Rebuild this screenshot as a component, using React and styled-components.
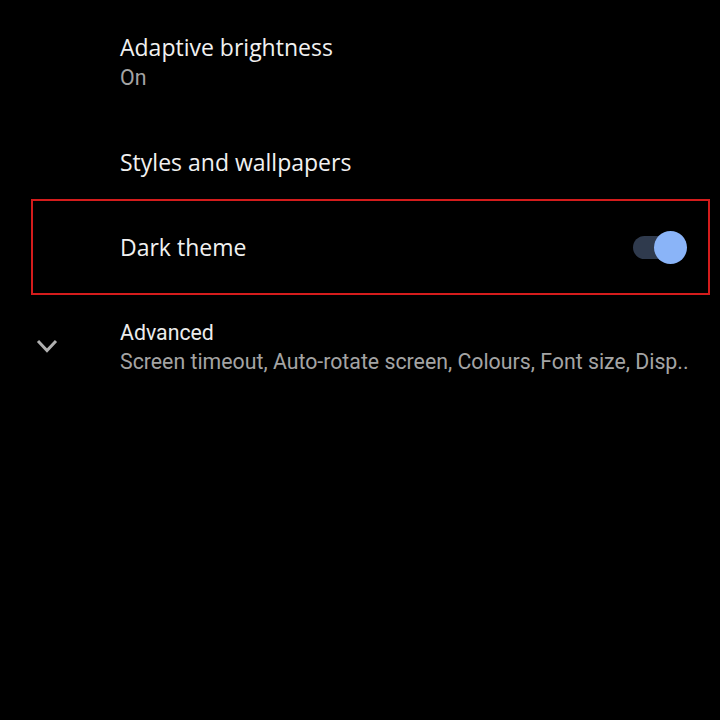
import styled, { createGlobalStyle } from "styled-components";

const GlobalStyle = createGlobalStyle`
  html, body {
    margin: 0;
    padding: 0;
    background: #000;
  }
`;

const Screen = styled.div`
  width: 720px;
  height: 720px;
  background: #000;
  display: flex;
  flex-direction: column;
  overflow: hidden;
`;

const Pref = styled.div`
  display: flex;
  align-items: ${(p) => (p.top ? "flex-start" : "center")};
  height: ${(p) => p.h}px;
  padding: ${(p) => p.pad || "0"};
  box-sizing: border-box;
`;

const Highlight = styled.div`
  display: flex;
  align-items: center;
  height: 96px;
  margin: 0 10px 0 31px;
  padding: 0 21px 0 87px;
  border: 2px solid #d41c1c;
  box-sizing: border-box;
`;

const IconSlot = styled.div`
  width: 120px;
  flex-shrink: 0;
  display: flex;
  padding-left: 36px;
  padding-top: ${(p) => p.offset || 0}px;
  box-sizing: border-box;
`;

const Texts = styled.div`
  display: flex;
  flex-direction: column;
  flex: 1;
  min-width: 0;
`;

const Title = styled.div`
  font-family: "Open Sans", Roboto, sans-serif;
  font-size: 23px;
  line-height: 30px;
  color: #f1f1f1;
  white-space: nowrap;
`;

const Summary = styled.div`
  font-family: Roboto, "Open Sans", sans-serif;
  font-size: 21.3px;
  line-height: 31px;
  color: #a4a4a4;
  white-space: nowrap;
`;

const AdvTitle = styled.div`
  font-family: Roboto, sans-serif;
  font-size: 21.3px;
  line-height: 26px;
  color: #ececec;
`;

const Track = styled.div`
  position: relative;
  width: 50px;
  height: 23px;
  border-radius: 12px;
  background: #2f3a4d;
  margin-right: 4px;
`;

const Thumb = styled.div`
  position: absolute;
  right: -4px;
  top: -5px;
  width: 33px;
  height: 33px;
  border-radius: 50%;
  background: #8ab4f8;
`;

const Chevron = () => (
  <svg width="24" height="16" viewBox="0 0 24 16">
    <polyline
      points="2,3 11,12.5 20,3"
      fill="none"
      stroke="#b0b0b0"
      strokeWidth="3"
    />
  </svg>
);

export default function App() {
  return (
    <Screen>
      <GlobalStyle />
      <Pref h={124} top pad="32px 0 0 0">
        <IconSlot />
        <Texts>
          <Title>Adaptive brightness</Title>
          <Summary>On</Summary>
        </Texts>
      </Pref>
      <Pref h={75}>
        <IconSlot />
        <Texts>
          <Title>Styles and wallpapers</Title>
        </Texts>
      </Pref>
      <Highlight>
        <Texts>
          <Title>Dark theme</Title>
        </Texts>
        <Track>
          <Thumb />
        </Track>
      </Highlight>
      <Pref h={100} top pad="25px 0 0 0">
        <IconSlot offset={18}>
          <Chevron />
        </IconSlot>
        <Texts>
          <AdvTitle>Advanced</AdvTitle>
          <Summary>Screen timeout, Auto-rotate screen, Colours, Font size, Disp..</Summary>
        </Texts>
      </Pref>
    </Screen>
  );
}
